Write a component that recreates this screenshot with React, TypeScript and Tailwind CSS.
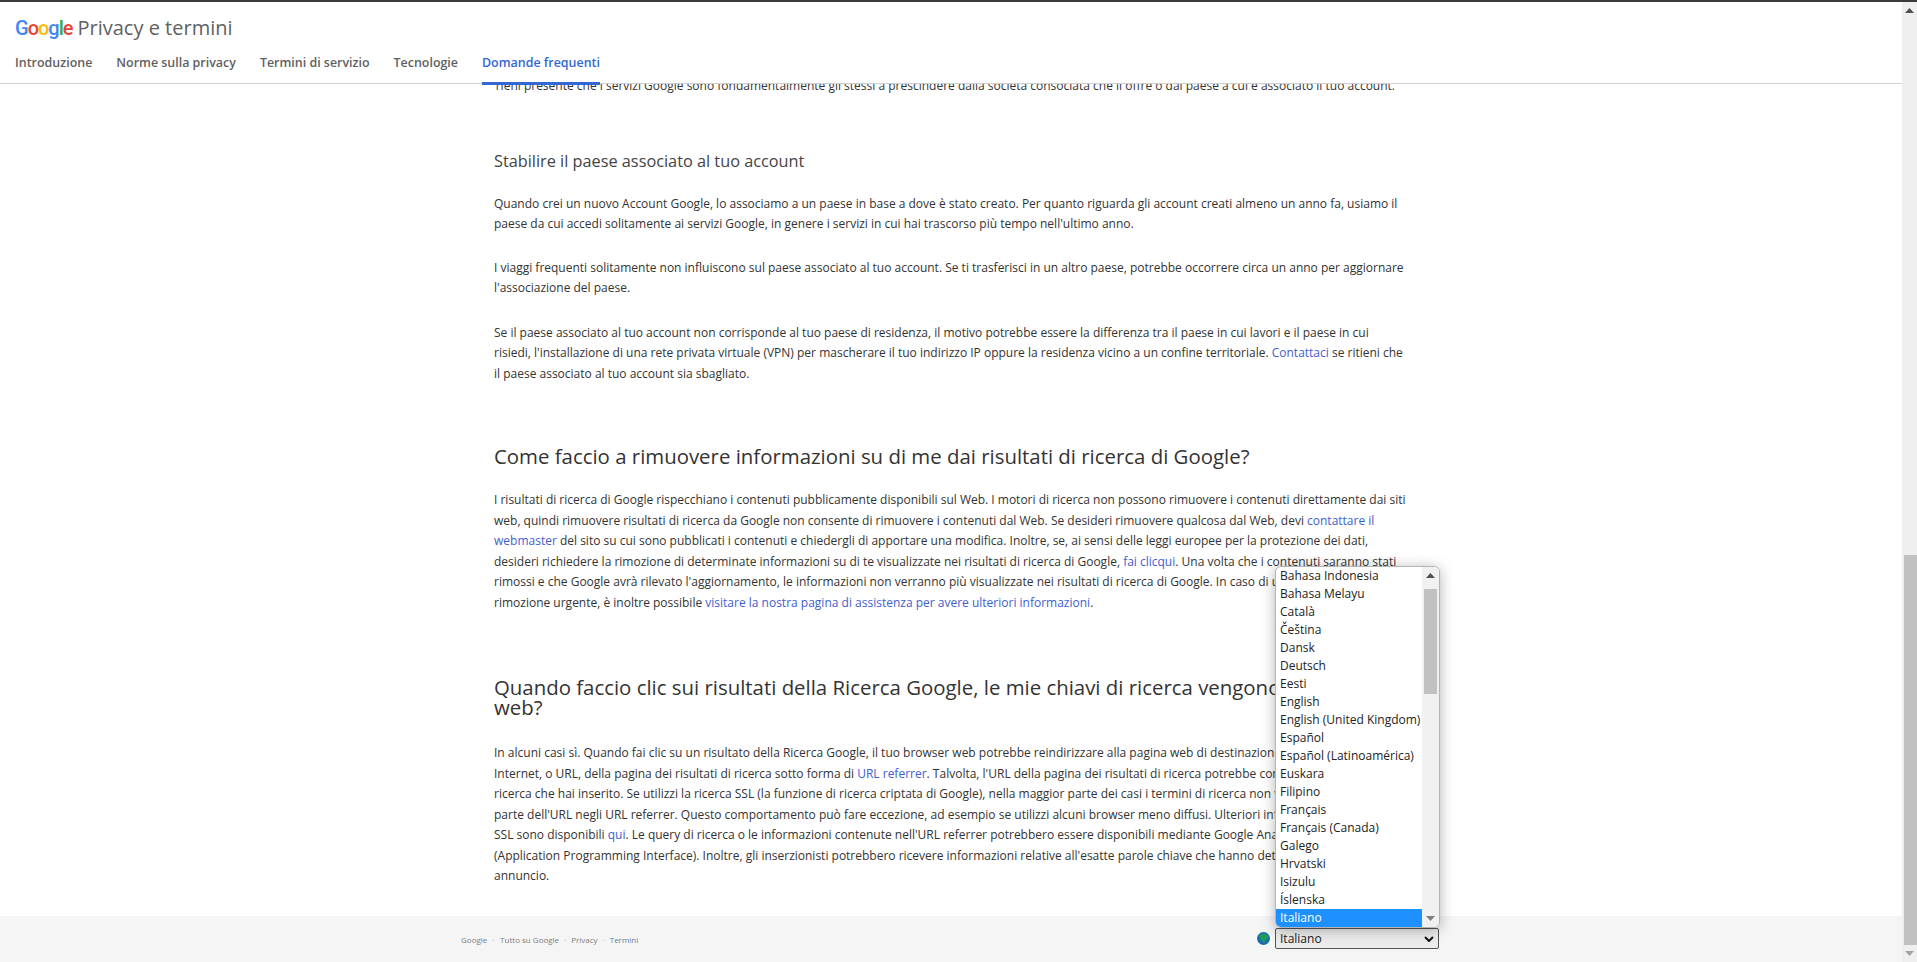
const font = '"Open Sans", "Noto Sans", sans-serif';

const languages = [
  'Bahasa Indonesia', 'Bahasa Melayu', 'Català', 'Čeština', 'Dansk', 'Deutsch', 'Eesti', 'English',
  'English (United Kingdom)', 'Español', 'Español (Latinoamérica)', 'Euskara', 'Filipino', 'Français',
  'Français (Canada)', 'Galego', 'Hrvatski', 'Isizulu', 'Íslenska', 'Italiano',
];

function A({ children }: { children: React.ReactNode }) {
  return <a className="text-[#4160cf]">{children}</a>;
}

function GoogleLogo() {
  return (
    <span className="mr-[5px] font-['Roboto'] text-[20px] font-medium leading-[28px] tracking-[-1px]">
      <span className="text-[#4285f4]">G</span>
      <span className="text-[#ea4335]">o</span>
      <span className="text-[#fbbc05]">o</span>
      <span className="text-[#4285f4]">g</span>
      <span className="text-[#34a853]">l</span>
      <span className="text-[#ea4335]">e</span>
    </span>
  );
}

function Globe() {
  return (
    <svg width="13" height="13" viewBox="0 0 13 13" className="mr-[5px]">
      <circle cx="6.5" cy="6.5" r="6.5" fill="#1b6fa8" />
      <path d="M2.5 3 L7 1.5 L11 3.5 L11 6.5 L8 8 L7 11.5 L5 8.5 L3 6.5 Z" fill="#1e9e5a" />
    </svg>
  );
}

function Arrow({ up, color }: { up?: boolean; color: string }) {
  return (
    <svg width="9" height="5" viewBox="0 0 9 5">
      <path d={up ? 'M4.5 0 L9 5 L0 5 Z' : 'M0 0 L9 0 L4.5 5 Z'} fill={color} />
    </svg>
  );
}

export default function App() {
  return (
    <div className="relative flex h-[962px] w-[1917px] flex-col overflow-hidden bg-white text-[#333]" style={{ fontFamily: font }}>
      <div className="h-[2px] shrink-0 bg-[#3c3c3c]" />
      <div className="flex min-h-0 flex-1">
        <div className="flex min-w-0 flex-1 flex-col">
          <header className="z-10 h-[82px] shrink-0 border-b border-b-[#d0d0d0] pl-[15px]">
            <div className="flex h-[46px] items-center pt-[5px]">
              <GoogleLogo />
              <span className="text-[20px] leading-[28px] text-[#616161]">Privacy e termini</span>
            </div>
            <nav className="flex h-[35px] gap-[24px] text-[12.45px] font-semibold leading-[30px] text-[#5f5f5f]">
              <a>Introduzione</a>
              <a>Norme sulla privacy</a>
              <a>Termini di servizio</a>
              <a>Tecnologie</a>
              <a className="h-[37px] border-b-[3px] border-[#3367d6] text-[#3367d6]">Domande frequenti</a>
            </nav>
          </header>

          <main className="min-h-0 flex-1 overflow-hidden">
            <div className="ml-[494px] mt-[-8px] w-[913px] text-[12px] leading-[20.5px] text-[#333]">
              <p>Tieni presente che i servizi Google sono fondamentalmente gli stessi a prescindere dalla società consociata che li offre o dal paese a cui è associato il tuo account.</p>

              <h3 className="mt-[52px] text-[16.3px] leading-[24px] text-[#444]">Stabilire il paese associato al tuo account</h3>
              <p className="mt-[21px]">Quando crei un nuovo Account Google, lo associamo a un paese in base a dove è stato creato. Per quanto riguarda gli account creati almeno un anno fa, usiamo il paese da cui accedi solitamente ai servizi Google, in genere i servizi in cui hai trascorso più tempo nell'ultimo anno.</p>
              <p className="mt-[23px]">I viaggi frequenti solitamente non influiscono sul paese associato al tuo account. Se ti trasferisci in un altro paese, potrebbe occorrere circa un anno per aggiornare l'associazione del paese.</p>
              <p className="mt-[24px]">Se il paese associato al tuo account non corrisponde al tuo paese di residenza, il motivo potrebbe essere la differenza tra il paese in cui lavori e il paese in cui risiedi, l'installazione di una rete privata virtuale (VPN) per mascherare il tuo indirizzo IP oppure la residenza vicino a un confine territoriale. <A>Contattaci</A> se ritieni che il paese associato al tuo account sia sbagliato.</p>

              <h2 className="mt-[60px] text-[20.4px] leading-[25px] text-[#333]">Come faccio a rimuovere informazioni su di me dai risultati di ricerca di Google?</h2>
              <p className="mt-[21px]">I risultati di ricerca di Google rispecchiano i contenuti pubblicamente disponibili sul Web. I motori di ricerca non possono rimuovere i contenuti direttamente dai siti web, quindi rimuovere risultati di ricerca da Google non consente di rimuovere i contenuti dal Web. Se desideri rimuovere qualcosa dal Web, devi <A>contattare il webmaster</A> del sito su cui sono pubblicati i contenuti e chiedergli di apportare una modifica. Inoltre, se, ai sensi delle leggi europee per la protezione dei dati, desideri richiedere la rimozione di determinate informazioni su di te visualizzate nei risultati di ricerca di Google, <A>fai clicqui</A>. Una volta che i contenuti saranno stati rimossi e che Google avrà rilevato l'aggiornamento, le informazioni non verranno più visualizzate nei risultati di ricerca di Google. In caso di una richiesta di rimozione urgente, è inoltre possibile <A>visitare la nostra pagina di assistenza per avere ulteriori informazioni</A>.</p>

              <h2 className="mt-[64px] text-[20.4px] leading-[20px] text-[#333]">Quando faccio clic sui risultati della Ricerca Google, le mie chiavi di ricerca vengono inviate ai siti web?</h2>
              <p className="mt-[26px]">In alcuni casi sì. Quando fai clic su un risultato della Ricerca Google, il tuo browser web potrebbe reindirizzare alla pagina web di destinazione l'indirizzo<br />Internet, o URL, della pagina dei risultati di ricerca sotto forma di <A>URL referrer</A>. Talvolta, l'URL della pagina dei risultati di ricerca potrebbe contenere la query di<br />ricerca che hai inserito. Se utilizzi la ricerca SSL (la funzione di ricerca criptata di Google), nella maggior parte dei casi i termini di ricerca non verranno inclusi come<br />parte dell'URL negli URL referrer. Questo comportamento può fare eccezione, ad esempio se utilizzi alcuni browser meno diffusi. Ulteriori informazioni sulla ricerca<br />SSL sono disponibili <A>qui</A>. Le query di ricerca o le informazioni contenute nell'URL referrer potrebbero essere disponibili mediante Google Analytics o una API<br />(Application Programming Interface). Inoltre, gli inserzionisti potrebbero ricevere informazioni relative all'esatte parole chiave che hanno determinato la scelta di un<br />annuncio.</p>
            </div>
          </main>

          <footer className="flex h-[46px] shrink-0 items-center bg-[#f5f5f5] pl-[461px] pt-[2px] text-[8px] text-[#7d7d7d]">
            <span className="w-[25px]">Google</span>
            <span className="mx-[6px] text-[#aaa]">·</span>
            <span>Tutto su Google</span>
            <span className="mx-[5px] text-[#aaa]">·</span>
            <span>Privacy</span>
            <span className="mx-[5px] text-[#aaa]">·</span>
            <span className="text-[#6b7a99]">Termini</span>
            <div className="absolute left-[1257px] top-[928px] flex items-center">
              <Globe />
              <div className="flex h-[21px] w-[164px] items-center justify-between rounded-[2px] border border-[#555] bg-[#ececec] px-[4px] text-[12px] text-[#222]">
                <span>Italiano</span>
                <svg width="10" height="6" viewBox="0 0 10 6"><path d="M1 1 L5 5 L9 1" fill="none" stroke="#111" strokeWidth="2" /></svg>
              </div>
            </div>
          </footer>
        </div>

        <div className="flex w-[15px] shrink-0 flex-col bg-[#efefef]">
          <div className="flex h-[17px] items-center justify-center"><Arrow up color="#505050" /></div>
          <div className="ml-[2px] mt-[536px] h-[391px] bg-[#c1c1c1]" />
          <div className="mt-auto flex h-[17px] items-center justify-center"><Arrow color="#a3a3a3" /></div>
        </div>
      </div>

      <div className="absolute left-[1275px] top-[566px] flex h-[362px] w-[165px] overflow-hidden rounded-[6px] border border-[#b5b5b5] bg-white shadow-[0_2px_14px_rgba(0,0,0,0.3)]">
        <ul className="min-w-0 flex-1 text-[12px] leading-[18px] text-[#222]">
          {languages.map((l) => (
            <li key={l} className={l === 'Italiano' ? 'bg-[#1e90ff] pl-[4px] text-white' : 'whitespace-nowrap pl-[4px]'}>{l}</li>
          ))}
        </ul>
        <div className="flex w-[17px] shrink-0 flex-col items-center bg-[#f1f1f1]">
          <div className="flex h-[16px] items-center"><Arrow up color="#505050" /></div>
          <div className="mt-[6px] h-[105px] w-[13px] bg-[#c1c1c1]" />
          <div className="mt-auto flex h-[18px] items-center"><Arrow color="#808080" /></div>
        </div>
      </div>
    </div>
  );
}
